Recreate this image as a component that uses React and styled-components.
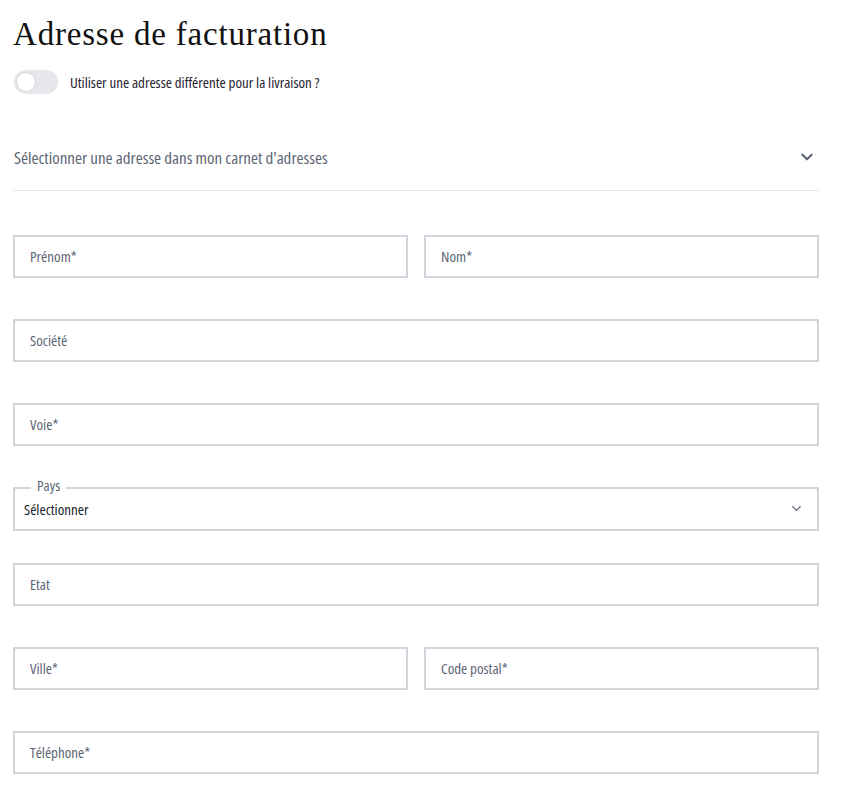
import React from 'react'
import styled, { createGlobalStyle } from 'styled-components'

const GlobalStyle = createGlobalStyle`
  body {
    margin: 0;
    background: #fff;
    font-family: "Open Sans", sans-serif;
    font-stretch: 75%;
  }
`

const Page = styled.div`
  width: 806px;
  padding: 14px 0 20px 13px;
`

const Title = styled.h1`
  font-family: "Liberation Serif", serif;
  font-stretch: 100%;
  font-weight: 400;
  font-size: 33px;
  letter-spacing: 0.8px;
  line-height: 40px;
  color: #111;
  margin: 0;
`

const ToggleRow = styled.label`
  display: flex;
  align-items: center;
  gap: 12px;
  margin-top: 16px;
  margin-left: 1px;
  font-size: 15px;
  color: #1f2433;
`

const Switch = styled.span`
  position: relative;
  width: 44px;
  height: 24px;
  border-radius: 12px;
  background: #e5e7eb;
  flex-shrink: 0;
  &::after {
    content: '';
    position: absolute;
    left: 2px;
    top: 2px;
    width: 18px;
    height: 18px;
    border-radius: 50%;
    background: #fff;
    border: 1px solid #d1d5db;
  }
`

const BookRow = styled.div`
  display: flex;
  align-items: center;
  justify-content: space-between;
  height: 66px;
  margin-top: 30px;
  border-bottom: 1px solid #e5e7eb;
  padding: 0 4px 0 1px;
  font-size: 17px;
  color: #5c6574;
`

const Form = styled.div`
  display: grid;
  grid-template-columns: 1fr 1fr;
  column-gap: 16px;
  row-gap: 41px;
  margin-top: 44px;
`

const Field = styled.div`
  grid-column: ${p => (p.$full ? '1 / -1' : 'auto')};
  height: 43px;
  box-sizing: border-box;
  border: 2px solid #d1d5db;
  display: flex;
  align-items: center;
  padding: 0 0 2px 15px;
  font-size: 15px;
  color: #5c6574;
`

const Fieldset = styled.fieldset`
  grid-column: 1 / -1;
  margin: -9px 0 -9px 0;
  height: 53px;
  box-sizing: border-box;
  border: 2px solid #d1d5db;
  padding: 0 14px 9px 9px;
  display: flex;
  align-items: center;
  justify-content: space-between;
  font-size: 15px;
  color: #1a1f2b;
  min-width: 0;
`

const Legend = styled.legend`
  font-size: 15px;
  color: #5c6574;
  padding: 0 6px 5px;
  margin-left: 7px;
  line-height: 14px;
`

const Chevron = ({ size = 14, width = 2.4 }) => (
  <svg width={size} height={size} viewBox="0 0 24 24" fill="none" stroke="#5c6574" strokeWidth={width} strokeLinecap="round" strokeLinejoin="round">
    <path d="M5 8.5l7 7 7-7" />
  </svg>
)

export default function App() {
  return (
    <Page>
      <GlobalStyle />
      <Title>Adresse de facturation</Title>
      <ToggleRow>
        <Switch />
        Utiliser une adresse différente pour la livraison ?
      </ToggleRow>
      <BookRow>
        <span>Sélectionner une adresse dans mon carnet d'adresses</span>
        <Chevron size={16} width={3.2} />
      </BookRow>
      <Form>
        <Field>Prénom*</Field>
        <Field>Nom*</Field>
        <Field $full>Société</Field>
        <Field $full>Voie*</Field>
        <Fieldset>
          <Legend>Pays</Legend>
          <span>Sélectionner</span>
          <Chevron size={13} width={2.4} />
        </Fieldset>
        <Field $full>Etat</Field>
        <Field>Ville*</Field>
        <Field>Code postal*</Field>
        <Field $full>Téléphone*</Field>
      </Form>
    </Page>
  )
}
